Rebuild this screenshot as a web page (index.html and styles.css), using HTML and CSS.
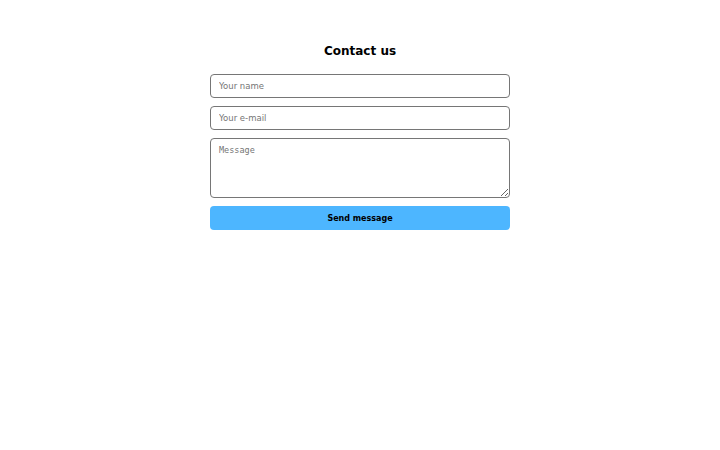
FILE: index.html
```html
<!DOCTYPE html>
<html lang="en">
<head>
    <meta charset="UTF-8">
    <meta name="viewport" content="width=device-width, initial-scale=1.0">
    <title>Contact us</title>
    <link rel="stylesheet" href="styles.css">
</head>
<body>
    <div id="contact">
        <h1>Contact us</h1>
        <form class="contact-form" onsubmit="return false;">
            <input type="text" placeholder="Your name">
            <input type="email" placeholder="Your e-mail">
            <textarea placeholder="Message"></textarea>
            <button type="submit">Send message</button>
        </form>
    </div>
</body>
</html>
```

FILE: styles.css
```css
body {
    font-family: 'DejaVu Sans', sans-serif;
    margin: 0;
    padding: 0;
    background: #ffffff;
    color: #000000;
}
#contact {
    width: 300px;
    margin: 0 auto;
    padding-top: 44px;
}
#contact h1 {
    font-size: 12px;
    font-weight: bold;
    text-align: center;
    margin: 0 0 16px;
    line-height: 14px;
}
.contact-form {
    display: flex;
    flex-direction: column;
    gap: 8px;
}
.contact-form input, .contact-form textarea {
    box-sizing: border-box;
    width: 100%;
    margin: 0;
    border: 1px solid #767676;
    border-radius: 4px;
    padding: 0 8px;
    font-size: 8.5px;
    color: #000000;
}
.contact-form input {
    font-family: 'DejaVu Sans', sans-serif;
    height: 24px;
}
.contact-form textarea {
    font-family: 'DejaVu Sans Mono', monospace;
    font-size: 8.5px;
    height: 60px;
    padding-top: 6px;
}
.contact-form button {
    height: 24px;
    border: none;
    border-radius: 4px;
    background: #4db6ff;
    color: #000000;
    font-family: 'DejaVu Sans', sans-serif;
    font-size: 8px;
    font-weight: bold;
    cursor: pointer;
}
```
